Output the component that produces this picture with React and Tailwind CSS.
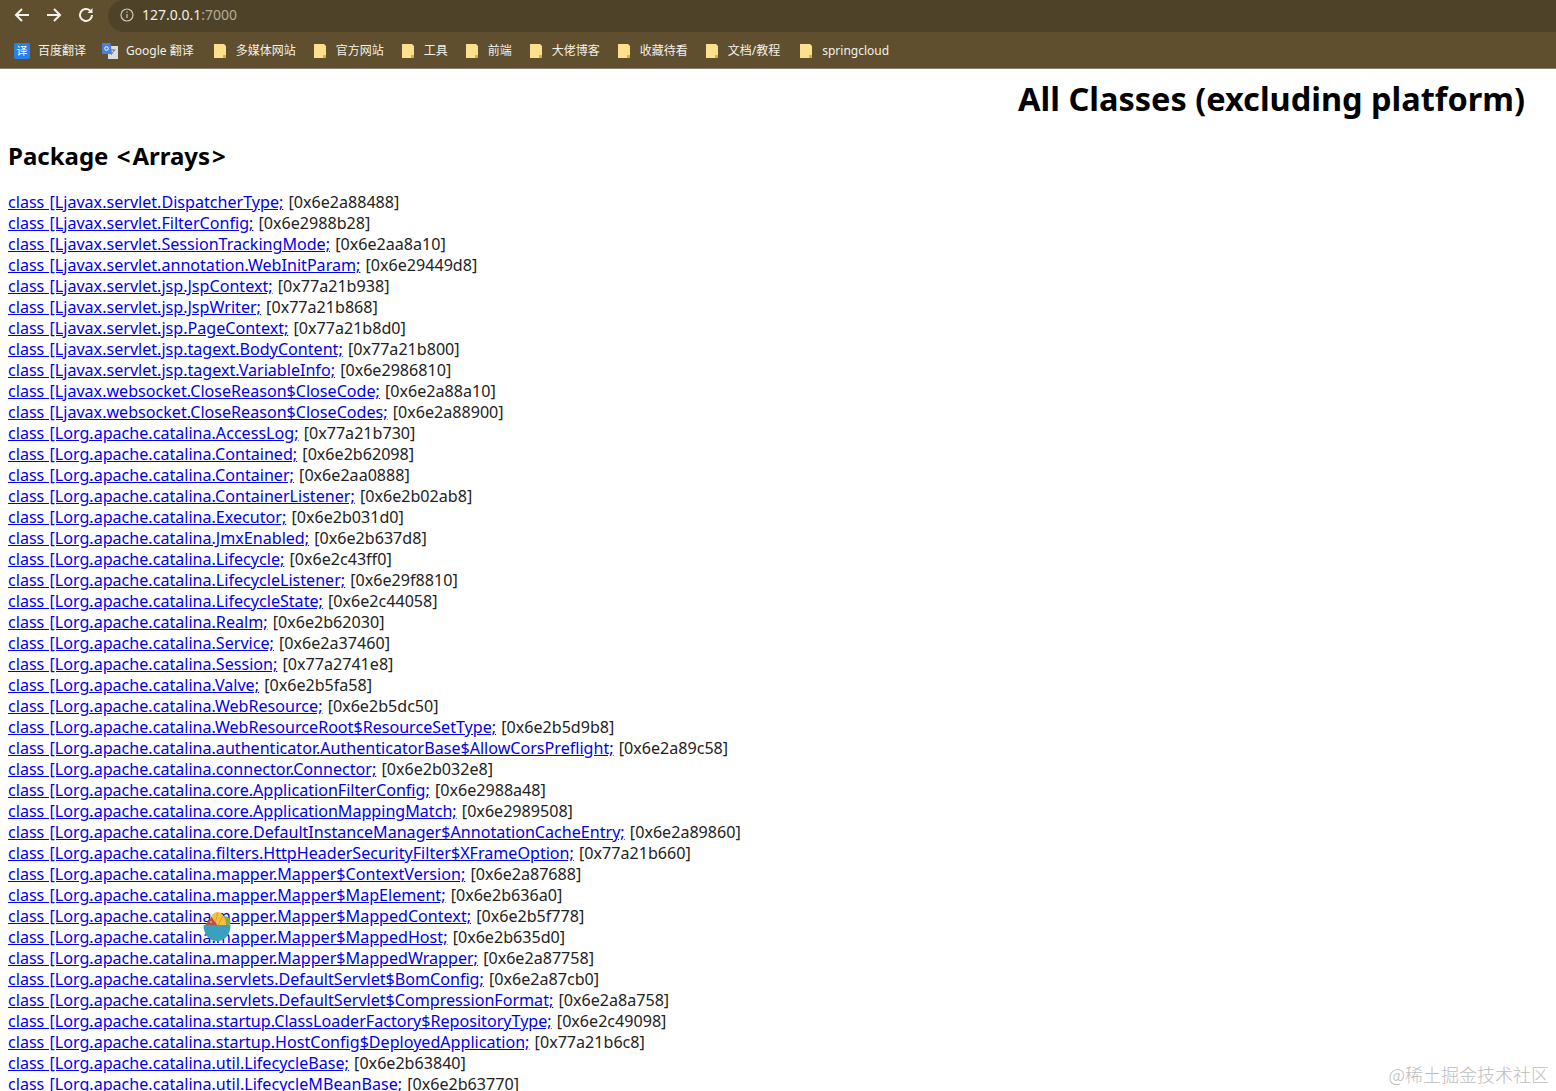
import React from 'react';

const BOOKMARKS = [
  ['多媒体网站', 'ml-[20px]'],
  ['官方网站', 'ml-[18px]'],
  ['工具', 'ml-[18px]'],
  ['前端', 'ml-[18px]'],
  ['大佬博客', 'ml-[18px]'],
  ['收藏待看', 'ml-[18px]'],
  ['文档/教程', 'ml-[18px]'],
  ['springcloud', 'ml-[20px]'],
];

const CLASSES = [
  ['class [Ljavax.servlet.DispatcherType;', '0x6e2a88488'],
  ['class [Ljavax.servlet.FilterConfig;', '0x6e2988b28'],
  ['class [Ljavax.servlet.SessionTrackingMode;', '0x6e2aa8a10'],
  ['class [Ljavax.servlet.annotation.WebInitParam;', '0x6e29449d8'],
  ['class [Ljavax.servlet.jsp.JspContext;', '0x77a21b938'],
  ['class [Ljavax.servlet.jsp.JspWriter;', '0x77a21b868'],
  ['class [Ljavax.servlet.jsp.PageContext;', '0x77a21b8d0'],
  ['class [Ljavax.servlet.jsp.tagext.BodyContent;', '0x77a21b800'],
  ['class [Ljavax.servlet.jsp.tagext.VariableInfo;', '0x6e2986810'],
  ['class [Ljavax.websocket.CloseReason$CloseCode;', '0x6e2a88a10'],
  ['class [Ljavax.websocket.CloseReason$CloseCodes;', '0x6e2a88900'],
  ['class [Lorg.apache.catalina.AccessLog;', '0x77a21b730'],
  ['class [Lorg.apache.catalina.Contained;', '0x6e2b62098'],
  ['class [Lorg.apache.catalina.Container;', '0x6e2aa0888'],
  ['class [Lorg.apache.catalina.ContainerListener;', '0x6e2b02ab8'],
  ['class [Lorg.apache.catalina.Executor;', '0x6e2b031d0'],
  ['class [Lorg.apache.catalina.JmxEnabled;', '0x6e2b637d8'],
  ['class [Lorg.apache.catalina.Lifecycle;', '0x6e2c43ff0'],
  ['class [Lorg.apache.catalina.LifecycleListener;', '0x6e29f8810'],
  ['class [Lorg.apache.catalina.LifecycleState;', '0x6e2c44058'],
  ['class [Lorg.apache.catalina.Realm;', '0x6e2b62030'],
  ['class [Lorg.apache.catalina.Service;', '0x6e2a37460'],
  ['class [Lorg.apache.catalina.Session;', '0x77a2741e8'],
  ['class [Lorg.apache.catalina.Valve;', '0x6e2b5fa58'],
  ['class [Lorg.apache.catalina.WebResource;', '0x6e2b5dc50'],
  ['class [Lorg.apache.catalina.WebResourceRoot$ResourceSetType;', '0x6e2b5d9b8'],
  ['class [Lorg.apache.catalina.authenticator.AuthenticatorBase$AllowCorsPreflight;', '0x6e2a89c58'],
  ['class [Lorg.apache.catalina.connector.Connector;', '0x6e2b032e8'],
  ['class [Lorg.apache.catalina.core.ApplicationFilterConfig;', '0x6e2988a48'],
  ['class [Lorg.apache.catalina.core.ApplicationMappingMatch;', '0x6e2989508'],
  ['class [Lorg.apache.catalina.core.DefaultInstanceManager$AnnotationCacheEntry;', '0x6e2a89860'],
  ['class [Lorg.apache.catalina.filters.HttpHeaderSecurityFilter$XFrameOption;', '0x77a21b660'],
  ['class [Lorg.apache.catalina.mapper.Mapper$ContextVersion;', '0x6e2a87688'],
  ['class [Lorg.apache.catalina.mapper.Mapper$MapElement;', '0x6e2b636a0'],
  ['class [Lorg.apache.catalina.mapper.Mapper$MappedContext;', '0x6e2b5f778'],
  ['class [Lorg.apache.catalina.mapper.Mapper$MappedHost;', '0x6e2b635d0'],
  ['class [Lorg.apache.catalina.mapper.Mapper$MappedWrapper;', '0x6e2a87758'],
  ['class [Lorg.apache.catalina.servlets.DefaultServlet$BomConfig;', '0x6e2a87cb0'],
  ['class [Lorg.apache.catalina.servlets.DefaultServlet$CompressionFormat;', '0x6e2a8a758'],
  ['class [Lorg.apache.catalina.startup.ClassLoaderFactory$RepositoryType;', '0x6e2c49098'],
  ['class [Lorg.apache.catalina.startup.HostConfig$DeployedApplication;', '0x77a21b6c8'],
  ['class [Lorg.apache.catalina.util.LifecycleBase;', '0x6e2b63840'],
  ['class [Lorg.apache.catalina.util.LifecycleMBeanBase;', '0x6e2b63770'],
];

function FolderIcon() {
  return (
    <svg width="12" height="14" viewBox="0 0 12 14" className="shrink-0">
      <path d="M0 0h10l2 2v12H0z" fill="#fde08d" />
      <path d="M9 11h3v3H9z" fill="#d9b23c" />
    </svg>
  );
}

function TranslateIcon() {
  return (
    <svg width="18" height="18" viewBox="0 0 18 18" className="shrink-0">
      <path d="M7 4h10v13H7z" fill="#dcdcdc" />
      <path d="M9.5 8h5M12 7v1M10 13l3.500-5" stroke="#777" strokeWidth="1" fill="none" />
      <path d="M1 1h8.500l1.500 11H1z" fill="#4a7de0" />
      <circle cx="5.500" cy="6.500" r="1.800" fill="none" stroke="#fff" strokeWidth="1" />
    </svg>
  );
}

function Bowl() {
  return (
    <svg width="28" height="31" viewBox="0 0 28 31">
      <circle cx="21.500" cy="11" r="6" fill="#7fae4a" />
      <path d="M6 14a8.500 13 0 0 1 17 0z" fill="#f4c13d" />
      <path d="M12 14 14.500 2M15 14l5-9" stroke="#e09a2b" strokeWidth="1" />
      <path d="M1.500 15 8.500 6 15 15z" fill="#b5524a" />
      <circle cx="8" cy="11" r="1" fill="#e0b0a0" />
      <path d="M0.500 14h27c0 10-6 16-13.500 16S0.500 24 0.500 14z" fill="#3ba0bd" />
    </svg>
  );
}

export default function App() {
  return (
    <div className="relative h-[1091px] overflow-hidden bg-white font-['Noto_Sans','Noto_Sans_CJK_SC',sans-serif]">
      {/* Browser chrome */}
      <div className="h-[32px] bg-[#5f4f2e] flex">
        <div className="w-[108px] flex items-center gap-[14px] pl-[13px] pb-[2px] text-[#f4f1e8]">
          <svg width="18" height="18" viewBox="0 0 18 18" fill="none" stroke="currentColor" strokeWidth="2"><path d="M16 9H3M9 3 3 9l6 6" /></svg>
          <svg width="18" height="18" viewBox="0 0 18 18" fill="none" stroke="currentColor" strokeWidth="2"><path d="M2 9h13M9 3l6 6-6 6" /></svg>
          <svg width="18" height="18" viewBox="0 0 18 18" fill="none" stroke="currentColor" strokeWidth="2"><path d="M15 9a6 6 0 1 1-1.800-4.300" /><path d="M15.500 2v5h-5" fill="currentColor" stroke="none" /></svg>
        </div>
        <div className="flex-1 flex items-center rounded-l-[16px] bg-[#4e4229] pl-[11px] pb-[3px] text-[14px]">
          <svg width="16" height="16" viewBox="0 0 16 16" fill="none" stroke="#cfc8b8" strokeWidth="1.200"><circle cx="8" cy="8" r="6" /><path d="M8 7v4M8 4.600v1.200" /></svg>
          <span className="ml-[7px] text-[#f1eee6]">127.0.0.1</span>
          <span className="text-[#b5ad9b]">:7000</span>
        </div>
      </div>
      <div className="h-[37px] bg-[#5f4f2e] border-b border-[#8a8170] flex items-center pl-[14px] pt-[2px] text-[12px] text-[#f4f1e8]">
        <span className="w-[16px] h-[16px] rounded-[2px] bg-[#2a80eb] text-white text-[11px] leading-[16px] text-center">译</span>
        <span className="ml-[8px]">百度翻译</span>
        <span className="ml-[15px]"><TranslateIcon /></span>
        <span className="ml-[7px]">Google 翻译</span>
        {BOOKMARKS.map(([name, gap]) => (
          <span key={name} className={`flex items-center gap-[10px] ${gap}`}>
            <FolderIcon />
            <span>{name}</span>
          </span>
        ))}
      </div>

      {/* Page */}
      <h1 className="text-[32.5px] leading-[44px] font-bold text-right text-black mt-[8px] pr-[31px]">All Classes (excluding platform)</h1>
      <h2 className="text-[24px] leading-[34px] font-bold text-black mt-[18px] pl-[8px] [word-spacing:2px]">
        Package <span className="mr-[2px]">&lt;</span>Arrays<span className="ml-[2px]">&gt;</span>
      </h2>
      <div className="mt-[19px] pl-[8px] text-[16.1px] leading-[21px] text-[#222] [word-spacing:1px]">
        {CLASSES.map(([name, addr]) => (
          <div key={name} className="whitespace-nowrap">
            <a href="#" className="text-[#0000ee] underline">{name}</a> [{addr}]
          </div>
        ))}
      </div>

      {/* Floating widget over the list */}
      <div className="absolute left-[203px] top-[911px]"><Bowl /></div>
      <div className="absolute right-[7px] top-[1062px] text-[18px] leading-[24px] text-[#bdbdbd] font-light font-['Noto_Sans_CJK_SC',sans-serif]">@稀土掘金技术社区</div>
    </div>
  );
}
